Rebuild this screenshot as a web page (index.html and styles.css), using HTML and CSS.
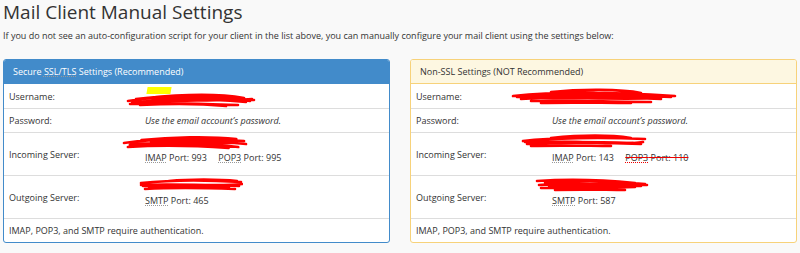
FILE: index.html
```html
<!DOCTYPE html>
<html>
<head>
<meta charset="utf-8">
<link rel="stylesheet" href="styles.css">
</head>
<body>
<h1 class="title">Mail Client Manual Settings</h1>
<p class="intro">If you do not see an auto-configuration script for your client in the list above, you can manually configure your mail client using the settings below:</p>
<div class="panels">
  <section class="panel panel-primary">
    <div class="panel-head">Secure <abbr>SSL</abbr>/<abbr>TLS</abbr> Settings (Recommended)</div>
    <div class="row row-first">
      <div class="label">Username:</div>
      <div class="value">
        <div class="srv srv-user">
          <span class="hilite hl-l"></span>
          <svg class="scribble sc-user-l" viewBox="0 0 130 16" preserveAspectRatio="none"><path d="M2 9 C30 4 70 5 128 8 M6 11 C40 6 80 7 120 10 M10 7 C40 4 90 3 124 9 M4 12 C50 10 90 13 112 13 M20 6 C60 2 95 2 118 6 M8 10 C50 8 100 9 126 7 M14 13 C50 11 80 12 100 14 M30 5 C60 3 90 4 110 5"/></svg>
        </div>
      </div>
    </div>
    <div class="row row-short">
      <div class="label">Password:</div>
      <div class="value"><em>Use the email account’s password.</em></div>
    </div>
    <div class="row row-tall">
      <div class="label">Incoming Server:</div>
      <div class="value">
        <div class="srv">
          <svg class="scribble sc-in-l" viewBox="0 0 130 16" preserveAspectRatio="none"><path d="M2 8 C30 4 70 3 126 6 M8 10 C40 8 90 9 120 12 M20 5 C50 2 90 1 118 4 M6 12 C40 10 80 11 110 13 M30 7 C60 5 100 6 128 9 M10 9 C50 7 90 8 116 8"/></svg>
        </div>
        <div><abbr>IMAP</abbr> Port: 993 <span class="gap"></span><abbr>POP3</abbr> Port: 995</div>
      </div>
    </div>
    <div class="row row-tall">
      <div class="label">Outgoing Server:</div>
      <div class="value">
        <div class="srv">
          <svg class="scribble sc-out-l" viewBox="0 0 104 16" preserveAspectRatio="none"><path d="M2 6 C30 3 70 3 102 5 M4 9 C40 7 80 8 100 9 M6 12 C40 10 70 11 96 12 M30 4 C50 2 80 2 98 4 M2 8 C40 6 80 10 103 7 M10 11 C40 9 70 10 90 10"/></svg>
        </div>
        <div><abbr>SMTP</abbr> Port: 465</div>
      </div>
    </div>
    <div class="row-foot">IMAP, POP3, and SMTP require authentication.</div>
  </section>
  <section class="panel panel-warning">
    <div class="panel-head">Non-SSL Settings (NOT Recommended)</div>
    <div class="row row-first">
      <div class="label">Username:</div>
      <div class="value">
        <div class="srv srv-user">
          <svg class="scribble sc-user-r" viewBox="0 0 166 18" preserveAspectRatio="none"><path d="M2 8 C40 4 100 4 164 8 M10 11 C50 8 110 9 150 11 M40 4 C70 1 110 1 130 5 M20 13 C60 12 100 14 140 14 M6 9 C50 7 120 6 160 9 M40 6 C60 3 80 4 100 6 M30 15 C60 14 90 15 120 15 M12 10 C60 9 110 12 150 10"/></svg>
        </div>
      </div>
    </div>
    <div class="row row-short">
      <div class="label">Password:</div>
      <div class="value"><em>Use the email account’s password.</em></div>
    </div>
    <div class="row row-tall">
      <div class="label">Incoming Server:</div>
      <div class="value">
        <div class="srv">
          <svg class="scribble sc-in-r" viewBox="0 0 126 16" preserveAspectRatio="none"><path d="M2 7 C30 4 80 3 124 5 M6 10 C40 8 90 9 120 10 M30 4 C60 1 90 1 110 4 M4 8 C50 6 100 12 122 8 M10 12 C40 11 70 12 90 12 M20 9 C50 7 80 8 112 9"/></svg>
        </div>
        <div><abbr>IMAP</abbr> Port: 143 <span class="gap"></span><span class="struck"><abbr>POP3</abbr> Port: 110</span></div>
      </div>
    </div>
    <div class="row row-tall">
      <div class="label">Outgoing Server:</div>
      <div class="value">
        <div class="srv">
          <svg class="scribble sc-out-r" viewBox="0 0 114 16" preserveAspectRatio="none"><path d="M2 4 C30 2 70 3 100 6 M4 8 C40 6 80 7 112 8 M6 11 C40 10 70 11 100 10 M20 13 C50 12 70 13 90 13 M10 6 C50 3 90 5 110 7 M14 10 C50 8 80 9 106 9"/></svg>
        </div>
        <div><abbr>SMTP</abbr> Port: 587</div>
      </div>
    </div>
    <div class="row-foot">IMAP, POP3, and SMTP require authentication.</div>
  </section>
</div>
</body>
</html>
```
FILE: styles.css
```css
html, body {
  margin: 0;
  padding: 0;
  background: #f9f9f9;
}
body {
  font-family: "Open Sans", "Noto Sans", sans-serif;
  color: #333;
  font-size: 9px;
  padding: 0 3px;
}
.title {
  font-size: 19px;
  font-weight: 400;
  margin: 0;
  line-height: 24px;
}
.intro {
  margin: 5px 0 0;
  line-height: 14px;
  font-size: 9px;
}
.panels {
  display: grid;
  grid-template-columns: 387px 387px;
  column-gap: 20px;
  margin-top: 16px;
}
.panel {
  background: #fff;
  border: 1px solid #428bca;
  border-radius: 3px;
  overflow: hidden;
}
.panel-head {
  box-sizing: border-box;
  height: 24px;
  line-height: 23px;
  padding: 0 9px;
}
.panel-primary .panel-head {
  background: #428bca;
  color: #fff;
  border-bottom: 1px solid #428bca;
}
.panel-warning {
  border-color: #f7d27a;
}
.panel-warning .panel-head {
  background: #fdf7e1;
  color: #333;
  border-bottom: 1px solid #f7d27a;
}
abbr {
  text-decoration: underline dotted;
  text-decoration-color: #999;
  text-underline-offset: 1px;
}
.row {
  box-sizing: border-box;
  display: grid;
  grid-template-columns: 136px 1fr;
  padding: 0 5px;
  border-bottom: 1px solid #ddd;
  align-items: center;
}
.row-first { height: 25px; }
.row-short { height: 24px; }
.row-tall { height: 43px; }
.value { line-height: 13px; }
.value em { font-style: italic; }
.srv {
  position: relative;
  height: 7px;
}
.srv-user { height: 24px; }
.gap { display: inline-block; width: 9px; }
.struck {
  text-decoration: line-through;
  text-decoration-color: #e00;
  text-decoration-thickness: 1px;
}
.struck abbr { text-decoration: underline dotted line-through; text-decoration-color: #e00; }
.row-foot {
  box-sizing: border-box;
  height: 23px;
  line-height: 23px;
  padding: 0 5px;
}
.scribble {
  position: absolute;
  fill: none;
  stroke: #ff0000;
  stroke-width: 2.6;
  stroke-linecap: round;
}
.hilite {
  position: absolute;
  background: #ffff00;
}
.hl-l { left: 2px; top: 3px; width: 24px; height: 7px; transform: skewX(-10deg); }
.sc-user-l { left: -19px; top: 8px; width: 130px; height: 16px; }
.sc-in-l { left: -23px; top: -9px; width: 126px; height: 16px; }
.sc-out-l { left: -6px; top: -10px; width: 104px; height: 16px; }
.sc-user-r { left: -41px; top: 4px; width: 166px; height: 18px; }
.sc-in-r { left: -31px; top: -10px; width: 126px; height: 16px; }
.sc-out-r { left: -17px; top: -10px; width: 114px; height: 16px; }
```
